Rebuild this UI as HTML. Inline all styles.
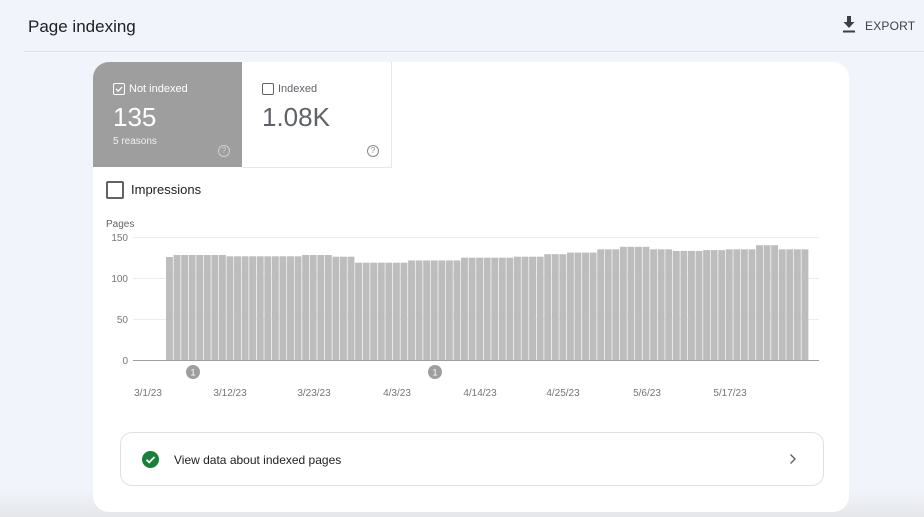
<!DOCTYPE html>
<html><head><style>
body{margin:0;width:924px;height:517px;background:#f1f4fb;font-family:"Liberation Sans",Arial,sans-serif;position:relative;overflow:hidden}
.abs{position:absolute}
</style></head><body>
<div class="abs" style="left:0;top:490px;width:924px;height:27px;background:linear-gradient(#f1f4fb,#e4e6ea)"></div>
<div class="abs" style="left:28px;top:17px;font-size:17px;color:#202124">Page indexing</div>
<div class="abs" style="left:842px;top:16px;"><svg width="14" height="17" viewBox="0 0 14 17"><path d="M5 0h4v6h3.5L7 12 1.5 6H5z" fill="#3c4043"/><rect x="1" y="14.5" width="12" height="2" fill="#3c4043"/></svg></div>
<div class="abs" style="left:865px;top:19px;font-size:12px;color:#3c4043;letter-spacing:.2px">EXPORT</div>
<div class="abs" style="left:24px;top:51px;width:900px;height:1px;background:#dfe2e8"></div>

<div class="abs" style="left:93px;top:62px;width:756px;height:450px;background:#fff;border-radius:16px;overflow:hidden">
  <div class="abs" style="left:0;top:0;width:149px;height:105px;background:#9e9e9e;color:#fff">
    <div class="abs" style="left:20px;top:21px;width:10px;height:10px;border:1px solid #fff;border-radius:2px"></div>
    <svg class="abs" style="left:21px;top:22px" width="10" height="10"><path d="M2 5l2.2 2.2L8 3" stroke="#fff" stroke-width="1.3" fill="none"/></svg>
    <div class="abs" style="left:36px;top:21px;font-size:11px">Not indexed</div>
    <div class="abs" style="left:20px;top:40px;font-size:26px;font-weight:300">135</div>
    <div class="abs" style="left:20px;top:74px;font-size:10px;color:#f0f0f0">5 reasons</div>
    <div class="abs" style="left:125px;top:83px;width:10px;height:10px;border:1px solid #d0d0d0;border-radius:50%;font-size:8px;text-align:center;line-height:10px;color:#d0d0d0">?</div>
  </div>
  <div class="abs" style="left:149px;top:0;width:149px;height:105px;border-right:1px solid #e8e8e8;border-bottom:1px solid #e8e8e8;color:#5f6368">
    <div class="abs" style="left:20px;top:21px;width:10px;height:10px;border:1px solid #5f6368;border-radius:2px"></div>
    <div class="abs" style="left:36px;top:21px;font-size:11px">Indexed</div>
    <div class="abs" style="left:20px;top:40px;font-size:26px;font-weight:300">1.08K</div>
    <div class="abs" style="left:125px;top:83px;width:10px;height:10px;border:1px solid #888;border-radius:50%;font-size:8px;text-align:center;line-height:10px;color:#888">?</div>
  </div>
  <div class="abs" style="left:13px;top:119px;width:14px;height:14px;border:2px solid #5f6368;border-radius:2px"></div>
  <div class="abs" style="left:38px;top:120px;font-size:13px;color:#202124">Impressions</div>
</div>

<svg class="abs" style="left:0;top:0" width="924" height="517">
<g font-family="Liberation Sans,Arial,sans-serif" font-size="10" fill="#757575">
<text x="106" y="227" fill="#5f6368">Pages</text>
<text x="128" y="241" text-anchor="end">150</text>
<text x="128" y="282" text-anchor="end">100</text>
<text x="128" y="323" text-anchor="end">50</text>
<text x="128" y="364" text-anchor="end">0</text>
</g>
<g stroke="#ececec" stroke-width="1">
<line x1="133" y1="237.5" x2="819" y2="237.5"/><line x1="133" y1="278.5" x2="819" y2="278.5"/><line x1="133" y1="319.5" x2="819" y2="319.5"/>
</g>
<g id="bars" fill="#bdbdbd"></g>
<line x1="133" y1="360.5" x2="819" y2="360.5" stroke="#9e9e9e"/>
<circle cx="193" cy="372" r="7" fill="#9e9e9e"/><text x="193" y="375.5" font-size="9" fill="#fff" text-anchor="middle" font-family="Liberation Sans,Arial">1</text>
<circle cx="435" cy="372" r="7" fill="#9e9e9e"/><text x="435" y="375.5" font-size="9" fill="#fff" text-anchor="middle" font-family="Liberation Sans,Arial">1</text>
<g font-family="Liberation Sans,Arial,sans-serif" font-size="10" fill="#757575" text-anchor="middle">
<text x="148" y="396">3/1/23</text><text x="230" y="396">3/12/23</text><text x="314" y="396">3/23/23</text><text x="397" y="396">4/3/23</text><text x="480" y="396">4/14/23</text><text x="563" y="396">4/25/23</text><text x="647" y="396">5/6/23</text><text x="730" y="396">5/17/23</text>
</g>
</svg>

<div class="abs" style="left:120px;top:432px;width:702px;height:52px;border:1px solid #e0e0e0;border-radius:12px;background:#fff">
  <svg class="abs" style="left:21px;top:18px" width="17" height="17"><circle cx="8.5" cy="8.5" r="8.5" fill="#188038"/><path d="M4.5 8.7l2.7 2.7L12.5 6" stroke="#fff" stroke-width="1.8" fill="none"/></svg>
  <div class="abs" style="left:53px;top:20px;font-size:12px;color:#202124">View data about indexed pages</div>
  <svg class="abs" style="left:668px;top:20px" width="8" height="12"><path d="M1.5 1.5l4.5 4.5-4.5 4.5" stroke="#5f6368" stroke-width="1.4" fill="none"/></svg>
</div>
<script>
var segs=[[1,125.6],[7,128],[10,126.5],[4,128],[3,126],[7,118.7],[7,121.5],[7,124.7],[4,126],[3,129],[4,131],[3,135],[4,138],[3,135],[4,133],[3,134],[4,135],[3,140],[4,135]];
var g=document.getElementById('bars'),x=166,s='';
segs.forEach(function(sg){for(var i=0;i<sg[0];i++){var h=sg[1]*0.82;s+='<rect x="'+x.toFixed(2)+'" y="'+(360-h).toFixed(1)+'" width="6.9" height="'+h.toFixed(1)+'"/>';x+=7.565;}});
g.innerHTML=s;
</script>
</body></html>
